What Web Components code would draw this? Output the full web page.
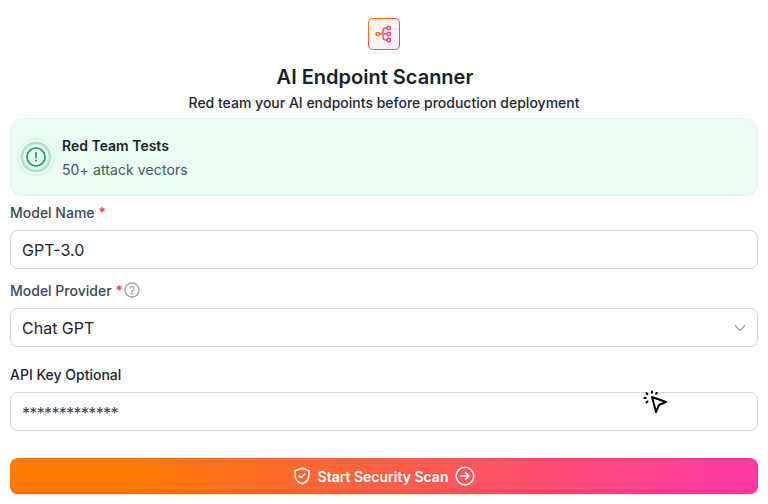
<!DOCTYPE html>
<html>
<head>
<meta charset="utf-8">
<title>AI Endpoint Scanner</title>
<style>
  html, body { margin: 0; background: #fff; }
  body { font-family: Inter, "Liberation Sans", sans-serif; color: #111827; height: 504px; overflow: hidden; }
  scan-page { display: block; }
</style>
</head>
<body>
<scan-page>
  <scan-header title="AI Endpoint Scanner" subtitle="Red team your AI endpoints before production deployment"></scan-header>
  <scan-feature heading="Red Team Tests" detail="50+ attack vectors"></scan-feature>
  <scan-field label="Model Name" required value="GPT-3.0" style="margin-top:7px"></scan-field>
  <scan-field label="Model Provider" required help select value="Chat GPT" style="margin-top:12px"></scan-field>
  <scan-field label="API Key Optional" strong secret value="*************" cursor style="margin-top:18px"></scan-field>
  <scan-button style="margin-top:27px">Start Security Scan</scan-button>
</scan-page>

<script>
class ScanPage extends HTMLElement {
  constructor() {
    super();
    this.attachShadow({ mode: 'open' }).innerHTML = `
      <style>
        :host { display: flex; flex-direction: column; padding: 18px 10px 0; }
      </style>
      <slot></slot>`;
  }
}

class ScanHeader extends HTMLElement {
  connectedCallback() {
    this.attachShadow({ mode: 'open' }).innerHTML = `
      <style>
        :host { display: flex; flex-direction: column; align-items: center; }
        .logo { width: 32px; height: 32px; box-sizing: border-box; border-radius: 5px; padding: 1px;
                background: linear-gradient(135deg, #ff7a00, #ff2fa0); }
        .logo div { width: 100%; height: 100%; border-radius: 4px; background: linear-gradient(135deg, #fff6ee, #fff0f8);
                display: flex; align-items: center; justify-content: center; }
        h1 { margin: 13px 18px 0 0; font-size: 20px; line-height: 28px; font-weight: 600; color: #1a1f2b; }
        p { margin: 2px 0 0; font-size: 14px; line-height: 20px; font-weight: 500; color: #1f2430; }
      </style>
      <div class="logo"><div>
        <svg width="20" height="20" viewBox="0 0 20 20" fill="none" stroke-width="1.5">
          <path d="M5 10H9M9 10H13M9 10V6.5Q9 4 11.5 4H13M9 10V13.5Q9 16 11.5 16H13" stroke="#ff5a5a"/>
          <circle cx="3.6" cy="10" r="1.6" stroke="#ff6a2a"/>
          <circle cx="14.8" cy="4" r="1.7" stroke="#ff4a70"/>
          <circle cx="14.8" cy="10" r="1.7" stroke="#ff3f88"/>
          <circle cx="14.8" cy="16" r="1.7" stroke="#ff2fa0"/>
        </svg>
      </div></div>
      <h1>${this.getAttribute('title')}</h1>
      <p>${this.getAttribute('subtitle')}</p>`;
  }
}

class ScanFeature extends HTMLElement {
  connectedCallback() {
    this.attachShadow({ mode: 'open' }).innerHTML = `
      <style>
        :host { display: flex; align-items: center; gap: 7px; height: 78px; box-sizing: border-box; margin-top: 5px;
                padding: 0 6px; background: #ebfcf2; border: 1px solid #e0f5e8; border-radius: 12px; }
        .txt { padding-top: 2px; }
        .t { font-size: 14px; line-height: 20px; font-weight: 600; color: #1a1f2b; margin-bottom: 4px; }
        .d { font-size: 14px; line-height: 20px; color: #4b5563; letter-spacing: .1px; }
      </style>
      <svg width="38" height="38" viewBox="0 0 38 38" fill="none">
        <circle cx="19" cy="19" r="18.2" stroke="#cfeedd" stroke-width="1"/>
        <circle cx="19" cy="19" r="14" stroke="#a9e2c3" stroke-width="2.4"/>
        <circle cx="19" cy="19" r="9" stroke="#12a05c" stroke-width="1.6"/>
        <path d="M19 14.8V19.6" stroke="#12a05c" stroke-width="1.7" stroke-linecap="round"/>
        <circle cx="19" cy="22.8" r="1" fill="#12a05c"/>
      </svg>
      <div class="txt">
        <div class="t">${this.getAttribute('heading')}</div>
        <div class="d">${this.getAttribute('detail')}</div>
      </div>`;
  }
}

class ScanField extends HTMLElement {
  connectedCallback() {
    const req = this.hasAttribute('required') ? '<span class="req">*</span>' : '';
    const help = this.hasAttribute('help') ? `
      <svg class="help" width="16" height="16" viewBox="0 0 16 16" fill="none" stroke="#9ca3af" stroke-width="1.3">
        <circle cx="8" cy="8" r="7"/>
        <path d="M6 6.2A2 2 0 1 1 8 8.6V9.4" stroke-linecap="round"/>
        <circle cx="8" cy="11.6" r=".5" fill="#9ca3af"/>
      </svg>` : '';
    const chevron = this.hasAttribute('select') ? `
      <svg class="chev" width="12" height="8" viewBox="0 0 12 8" fill="none" stroke="#9ca3af" stroke-width="1.4">
        <path d="M1 1.5L6 6.5L11 1.5"/>
      </svg>` : '';
    const cursor = this.hasAttribute('cursor') ? `
      <svg class="cursor" width="26" height="26" viewBox="0 0 26 26" fill="none" stroke="#000" stroke-linecap="round">
        <path d="M9 7L23 12L16 15L13 22Z" stroke-width="2" stroke-linejoin="round"/>
        <path d="M9 1.4V2.8M3.4 3.2L4.5 4.3M13.8 2.8L13 3.8M1.4 8H2.8M3.4 12.4L4.6 11.4" stroke-width="1.9"/>
      </svg>` : '';
    this.attachShadow({ mode: 'open' }).innerHTML = `
      <style>
        :host { display: block; }
        .label { display: flex; align-items: center; gap: 4px; height: 18px; font-size: 14px; font-weight: 500;
                 color: ${this.hasAttribute('strong') ? '#1f2430' : '#414754'}; }
        .req { color: #ef3b3b; }
        .help { margin-left: -3px; }
        .box { position: relative; display: flex; align-items: center; justify-content: space-between;
               height: 39px; box-sizing: border-box; margin-top: 9px; padding: 0 11px;
               border: 1px solid #d5d7de; border-radius: 8px; background: #fff;
               font-size: 16px; color: #1f2430; box-shadow: 0 1px 2px rgba(16,24,40,.04); }
        .secret { letter-spacing: -.65px; color: #3f4652; padding-top: 2px; }
        .cursor { position: absolute; left: 632px; top: -3px; }
      </style>
      <div class="label">${this.getAttribute('label')}${req}${help}</div>
      <div class="box"><span class="${this.hasAttribute('secret') ? 'secret' : ''}">${this.getAttribute('value')}</span>${chevron}${cursor}</div>`;
  }
}

class ScanButton extends HTMLElement {
  constructor() {
    super();
    this.attachShadow({ mode: 'open' }).innerHTML = `
      <style>
        :host { display: flex; align-items: center; justify-content: center; gap: 7px; height: 36px;
                box-sizing: border-box; border-radius: 8px; color: #fff; font-size: 14px; font-weight: 600;
                background: linear-gradient(90deg, #ff7a00 0%, #ff7a00 15%, #ff3ba0 95%);
                box-shadow: inset 0 -2px 0 rgba(190,60,30,.25), 0 1px 2px rgba(0,0,0,.12); }
      </style>
      <svg width="18" height="18" viewBox="0 0 18 18" fill="none" stroke="#fff" stroke-width="1.5" stroke-linejoin="round" stroke-linecap="round">
        <path d="M9 1.2L16 3.6V8.5C16 12.6 12.8 15.4 9 16.8C5.2 15.4 2 12.6 2 8.5V3.6Z"/>
        <path d="M6.2 8.8L8.2 10.8L11.8 7"/>
      </svg>
      <slot></slot>
      <svg width="20" height="20" viewBox="0 0 20 20" fill="none" stroke="#fff" stroke-width="1.6" stroke-linecap="round" stroke-linejoin="round">
        <circle cx="10" cy="10" r="8.8"/>
        <path d="M6 10H14M10.5 6.5L14 10L10.5 13.5"/>
      </svg>`;
  }
}

customElements.define('scan-page', ScanPage);
customElements.define('scan-header', ScanHeader);
customElements.define('scan-feature', ScanFeature);
customElements.define('scan-field', ScanField);
customElements.define('scan-button', ScanButton);
</script>
</body>
</html>
